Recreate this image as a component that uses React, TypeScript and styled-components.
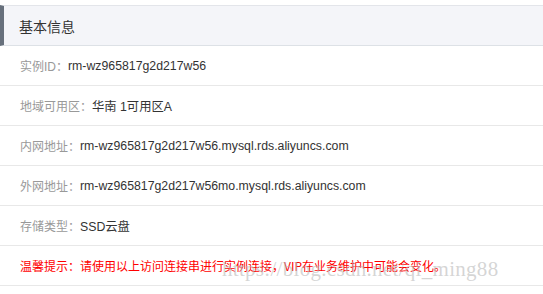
import styled, { createGlobalStyle } from 'styled-components';

const GlobalStyle = createGlobalStyle`
  html, body {
    margin: 0;
    padding: 0;
    background: #ffffff;
  }
  body {
    font-family: 'Liberation Sans', 'Noto Sans CJK SC', sans-serif;
  }
`;

const Panel = styled.div`
  position: relative;
  padding-top: 5px;
  width: 100%;
  overflow: hidden;
  height: 294px;
  box-sizing: border-box;
`;

const Header = styled.div`
  height: 39px;
  display: flex;
  align-items: center;
  padding-left: 15px;
  background: #f4f5f9;
  border-top: 1px solid #e3e5ea;
  border-bottom: 1px solid #dde1e6;
  border-left: 4px solid #67707c;
  font-size: 14px;
  color: #333333;
`;

const Row = styled.div`
  height: 39px;
  display: flex;
  align-items: center;
  padding-left: 20px;
  border-bottom: 1px solid #e8e8e8;
  font-size: 12px;
`;

const Label = styled.span`
  color: #999999;
`;

const Value = styled.span`
  color: #333333;
  font-size: 12.3px;
`;

const Warning = styled.span`
  color: #ff0000;
  font-family: 'Noto Sans CJK SC', sans-serif;
`;

const Watermark = styled.div`
  position: absolute;
  left: 222px;
  top: 257px;
  font-family: 'Liberation Serif', serif;
  font-size: 21px;
  color: rgba(185, 185, 185, 0.6);
  letter-spacing: 0.3px;
  pointer-events: none;
`;

const rows = [
  { label: '实例ID：', value: 'rm-wz965817g2d217w56' },
  { label: '地域可用区：', value: '华南 1可用区A' },
  { label: '内网地址：', value: 'rm-wz965817g2d217w56.mysql.rds.aliyuncs.com' },
  { label: '外网地址：', value: 'rm-wz965817g2d217w56mo.mysql.rds.aliyuncs.com' },
  { label: '存储类型：', value: 'SSD云盘' },
];

function App() {
  return (
    <>
      <GlobalStyle />
      <Panel>
        <Header>基本信息</Header>
        {rows.map((r) => (
          <Row key={r.label}>
            <Label>{r.label}</Label>
            <Value>{r.value}</Value>
          </Row>
        ))}
        <Row>
          <Warning>温馨提示：请使用以上访问连接串进行实例连接，VIP在业务维护中可能会变化。</Warning>
        </Row>
        <Watermark>https://blog.csdn.net/qi_ming88</Watermark>
      </Panel>
    </>
  );
}

export default App;
